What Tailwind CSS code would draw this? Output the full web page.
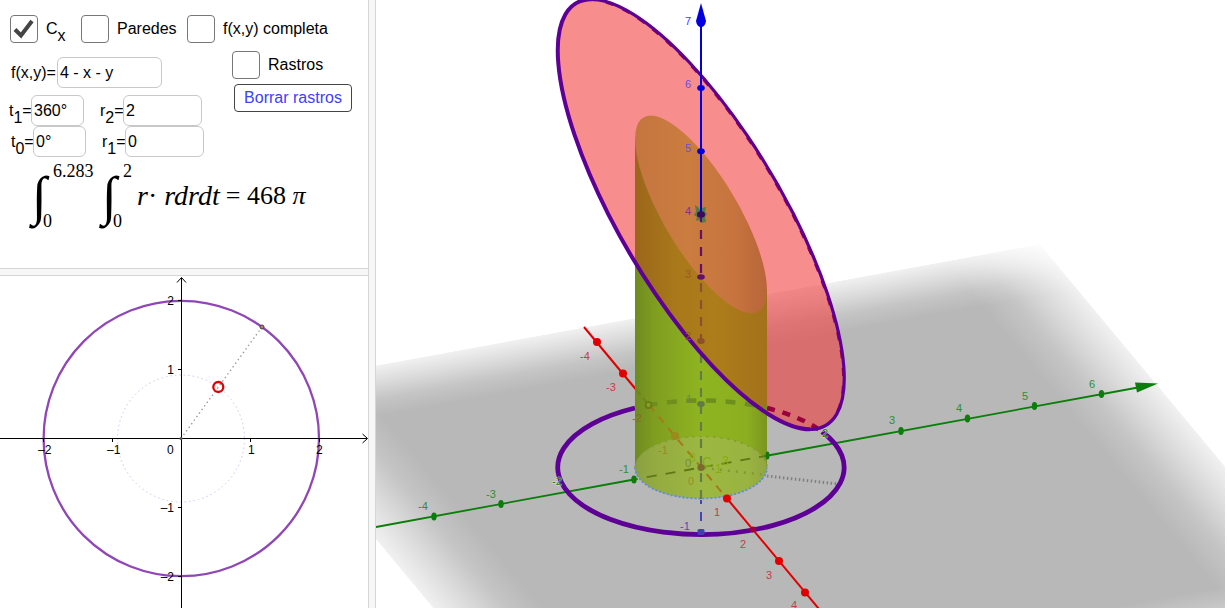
<!DOCTYPE html>
<html lang="es">

<head>
  <meta charset="UTF-8">
  <meta name="viewport" content="width=device-width, initial-scale=1.0">
  <script src="https://cdn.jsdelivr.net/npm/@tailwindcss/browser@4"></script>
  <title>Integral en coordenadas polares</title>
</head>

<body class="bg-white text-black font-['Liberation_Sans',Arial,sans-serif] text-[16px]">
  <main class="flex h-screen pr-0.5 pb-0.5">

    <div class="flex w-[369px] shrink-0 flex-col border-r border-[#d6d6d6]">

      <!-- controls -->
      <section class="h-[269px] shrink-0 overflow-hidden border-b border-[#d6d6d6] pt-[15px]">
        <div class="flex h-[27px] items-center pl-[10px]">
          <label class="flex w-[71px] items-center gap-2">
            <span class="relative size-[28px]">
              <input type="checkbox" checked class="peer block size-[28px] appearance-none rounded-[4px] border border-[#777]">
              <svg class="pointer-events-none absolute inset-0 hidden peer-checked:block" viewBox="0 0 28 28" fill="none">
                <path d="M5 14.5 L11 20.500 L22 6" stroke="#444" stroke-width="4" />
              </svg>
            </span>
            <span>C<sub class="static align-[-7px] text-[16px]">x</sub></span>
          </label>
          <label class="flex w-[106px] items-center gap-2">
            <input type="checkbox" class="size-[28px] appearance-none rounded-[4px] border border-[#777]">
            Paredes
          </label>
          <label class="flex items-center gap-2">
            <input type="checkbox" class="size-[28px] appearance-none rounded-[4px] border border-[#777]">
            f(x,y) completa
          </label>
        </div>

        <div class="flex">
          <div class="w-[232px] pt-[15px]">
            <div class="flex items-center pl-[11px]">
              <label for="fxy" class="w-[46px]">f(x,y)=</label>
              <input id="fxy" type="text" value="4 - x - y" class="h-[31px] w-[105px] rounded-md border border-[#c8c8c8] px-0.5">
            </div>
            <div class="mt-[7px] flex items-center pl-[9px]">
              <label for="t1" class="w-[22px]">t<sub class="static align-[-7px] text-[16px]">1</sub>=</label>
              <input id="t1" type="text" value="360°" class="h-[31px] w-[53px] rounded-md border border-[#c8c8c8] px-0.5">
              <label for="r2" class="ml-4 w-[23px]">r<sub class="static align-[-7px] text-[16px]">2</sub>=</label>
              <input id="r2" type="text" value="2" class="h-[31px] w-[79px] rounded-md border border-[#c8c8c8] px-0.5">
            </div>
            <div class="flex items-center pl-[11px]">
              <label for="t0" class="w-[22px]">t<sub class="static align-[-7px] text-[16px]">0</sub>=</label>
              <input id="t0" type="text" value="0°" class="h-[31px] w-[53px] rounded-md border border-[#c8c8c8] px-0.5">
              <label for="r1" class="ml-4 w-[23px]">r<sub class="static align-[-7px] text-[16px]">1</sub>=</label>
              <input id="r1" type="text" value="0" class="h-[31px] w-[79px] rounded-md border border-[#c8c8c8] px-0.5">
            </div>
          </div>
          <div class="pt-[9px]">
            <label class="flex items-center gap-2">
              <input type="checkbox" class="size-[28px] appearance-none rounded-[4px] border border-[#777]">
              Rastros
            </label>
            <button type="button" class="mt-[5px] ml-0.5 h-[28px] w-[118px] rounded-[4px] border border-[#444] leading-none text-[#4040ff]">Borrar rastros</button>
          </div>
        </div>

        <div class="flex items-center pt-1 pl-[32px] font-['Liberation_Serif',serif]">
          <span class="w-[21px] text-[54px] leading-[70px] italic">∫</span>
          <span class="flex h-[68px] w-[49px] flex-col justify-between text-[18px] leading-[18px]"><span>6.283</span><span class="-ml-2.5">0</span></span>
          <span class="w-[21px] text-[54px] leading-[70px] italic">∫</span>
          <span class="flex h-[68px] w-[14px] flex-col justify-between text-[18px] leading-[18px]"><span>2</span><span class="-ml-2.5">0</span></span>
          <span class="text-[28px] leading-[36px] whitespace-nowrap"><i>r</i>· <i>rdrdt</i></span>
          <span class="ml-1.5 text-[26px] leading-[36px] whitespace-nowrap">= 468 <i>π</i></span>
        </div>
      </section>

      <div class="h-[7px] shrink-0 border-b border-[#d6d6d6] bg-[#f7f7f7]"></div>

      <!-- 2D view -->
      <section class="min-h-0 flex-1">
        <svg class="block size-full" viewBox="0 276 368 332" preserveAspectRatio="xMinYMin slice" fill="none">
          <circle cx="181" cy="438.5" r="63.5" stroke="#c9c9f4" stroke-dasharray="1.5 3" />
          <path d="M181 438.5 L262 327" stroke="#999" stroke-width="1.4" stroke-dasharray="1.4 3" />
          <circle cx="181.3" cy="438.5" r="137.7" stroke="#9046b6" stroke-width="2.3" />
          <g stroke="#000" stroke-width="1">
            <path d="M0 438.5 H367 M362.5 434 L367.5 438.5 L362.5 443" />
            <path d="M181.5 608 V278 M177 282.5 L181.5 277.5 L186 282.5" />
            <path d="M43.5 438 v4 M112.5 438 v4 M250.5 438 v4 M319.5 438 v4" />
            <path d="M178 300.5 h4 M178 369.5 h4 M178 507.5 h4 M178 576.5 h4" />
          </g>
          <g fill="#000" font-size="12">
            <text x="38" y="454">–2</text>
            <text x="107" y="454">–1</text>
            <text x="167" y="454">0</text>
            <text x="248" y="454">1</text>
            <text x="316" y="454">2</text>
            <g text-anchor="end">
              <text x="174" y="305">2</text>
              <text x="174" y="374">1</text>
              <text x="174" y="512">–1</text>
              <text x="174" y="581">–2</text>
            </g>
          </g>
          <circle cx="181" cy="438.5" r="1.6" fill="#555" />
          <circle cx="262" cy="327" r="2" fill="#c97a5a" stroke="#444" />
          <circle cx="218.3" cy="387" r="5" stroke="#e00000" stroke-width="2.3" />
        </svg>
      </section>
    </div>

    <div class="w-[7px] shrink-0 border-r border-[#d6d6d6] bg-[#f7f7f7]"></div>

    <!-- 3D view -->
    <section class="min-w-0 flex-1">
      <svg class="block size-full" viewBox="376 0 849 608" preserveAspectRatio="xMinYMin slice" fill="none">
        <defs>
          <linearGradient id="fade">
            <stop offset="0" stop-color="#fff" stop-opacity=".2" />
            <stop offset=".04" stop-color="#fff" stop-opacity=".5" />
            <stop offset=".08" stop-color="#fff" stop-opacity=".82" />
            <stop offset=".12" stop-color="#fff" />
            <stop offset=".88" stop-color="#fff" />
            <stop offset=".92" stop-color="#fff" stop-opacity=".82" />
            <stop offset=".96" stop-color="#fff" stop-opacity=".5" />
            <stop offset="1" stop-color="#fff" stop-opacity=".2" />
          </linearGradient>
          <linearGradient id="fadeY" href="#fade" x2="0" y2="1" />
          <mask id="maskX" maskContentUnits="objectBoundingBox">
            <rect width="1" height="1" fill="url(#fade)" />
          </mask>
          <mask id="maskY" maskContentUnits="objectBoundingBox">
            <rect width="1" height="1" fill="url(#fadeY)" />
          </mask>
          <linearGradient id="green">
            <stop offset="0" stop-color="#6f8a20" />
            <stop offset=".15" stop-color="#7f9e20" />
            <stop offset=".5" stop-color="#8fb421" />
            <stop offset=".85" stop-color="#8bae20" />
            <stop offset="1" stop-color="#7b951f" />
          </linearGradient>
          <linearGradient id="brown">
            <stop offset="0" stop-color="#9c661b" />
            <stop offset=".3" stop-color="#a8781a" />
            <stop offset=".6" stop-color="#ae7d1a" />
            <stop offset="1" stop-color="#a3711b" />
          </linearGradient>
          <linearGradient id="orange" gradientUnits="userSpaceOnUse" x1="635" y1="0" x2="767" y2="0">
            <stop offset="0" stop-color="#c47640" />
            <stop offset=".4" stop-color="#cb7c3f" />
            <stop offset=".75" stop-color="#c7743f" />
            <stop offset="1" stop-color="#b86539" />
          </linearGradient>
          <clipPath id="disc">
            <circle r="1" transform="matrix(52 189 133.4 102.2 701 214.3)" />
          </clipPath>
          <clipPath id="topCut">
            <circle r="1" transform="matrix(23.9 86.9 61.4 47 701 214.3)" />
          </clipPath>
        </defs>

        <!-- ground plane -->
        <g transform="matrix(26 31.2 66.7 -12.2 701 467.5)">
          <g mask="url(#maskX)">
            <rect x="-4.49" y="-5.01" width="11.89" height="11.84" fill="#b8b8b8" mask="url(#maskY)" />
          </g>
        </g>

        <!-- x and y axes outside the cylinder -->
        <path d="M376 527 L634 479.5 M768 455.5 L1138 387.5" stroke="#0a7d0a" stroke-width="1.8" />
        <path d="M1135 382.5 L1158 383.5 L1137 392.5 Z" fill="#0a7d0a" />
        <g fill="#0a7d0a">
          <ellipse cx="434" cy="516.5" rx="2.7" ry="4" />
          <ellipse cx="501" cy="504" rx="2.7" ry="4" />
          <ellipse cx="901" cy="431" rx="2.7" ry="4" />
          <ellipse cx="967.5" cy="418.5" rx="2.7" ry="4" />
          <ellipse cx="1034.5" cy="406" rx="2.7" ry="4" />
          <ellipse cx="1101.5" cy="394" rx="2.7" ry="4" />
        </g>
        <path d="M584 327 L636 389.5" stroke="#e00000" stroke-width="2" />
        <g fill="#e00000">
          <circle cx="597" cy="342" r="4" />
          <circle cx="623" cy="373.5" r="4" />
        </g>

        <!-- domain border and radius -->
        <path d="M822 431.7 A143.2 67 0 1 1 635 408" stroke="#5e0096" stroke-width="4.8" />
        <path d="M767 476 L838 484" stroke="#808080" stroke-width="3" stroke-dasharray="1.5 2.5" />

        <!-- disc cut from the plane z = 4 - x - y -->
        <circle r="1" transform="matrix(52 189 133.4 102.2 701 214.3)" fill="#f33737" fill-opacity=".57" />
        <path d="M767 408 A143.2 67 0 0 1 822 431.7" stroke="#99003f" stroke-width="4.5" stroke-dasharray="8 8" />

        <!-- cylinder -->
        <path d="M635 139 L767 290 V467.5 A66 31 0 0 1 635 467.5 Z" fill="url(#green)" />
        <g clip-path="url(#disc)">
          <path d="M635 139 L767 290 V467.5 A66 31 0 0 1 635 467.5 Z" fill="url(#brown)" />
        </g>
        <rect x="630" y="110" width="140" height="210" fill="url(#orange)" clip-path="url(#topCut)" />
        <ellipse cx="701" cy="467.5" rx="66" ry="31" fill="#b0bd70" fill-opacity=".42" />
        <path d="M635 467.5 A66 31 0 0 1 767 467.5" stroke="#7f9a35" stroke-width="1.5" stroke-dasharray="2 5" />
        <path d="M635 467.5 A66 31 0 0 0 767 467.5" stroke="#5c8ce8" stroke-width="1.8" stroke-dasharray="2 2" />

        <!-- parts seen through the cylinder -->
        <path d="M635 408 A143.2 67 0 0 1 767 408" stroke="#6e8e1d" stroke-width="4.5" stroke-dasharray="10 9.5" stroke-dashoffset="-13" />
        <path d="M634 479.5 L768 455.5" stroke="#5f7714" stroke-width="1.8" stroke-dasharray="10 9" stroke-dashoffset="-13" />
        <path d="M636 389.5 L648 404" stroke="#708519" stroke-width="2" stroke-dasharray="7 4" />
        <path d="M649 405 L727 498.5" stroke="#a8791c" stroke-width="2" stroke-dasharray="8 7" />
        <path d="M704 468 L767 475" stroke="#7d9b34" stroke-width="2.5" stroke-dasharray="2 6" />
        <circle cx="648.5" cy="405" r="3" fill="#8ba021" stroke="#687d18" stroke-width="2" />
        <circle cx="675" cy="436" r="4" fill="#9a8b1b" />
        <g font-size="12" fill="#86ae10">
          <text x="689" y="462">8</text>
          <text x="702" y="467" font-size="14">C</text>
          <text x="715" y="473">1</text>
          <text x="722" y="465">3</text>
        </g>

        <!-- z axis -->
        <path d="M701 500 V534" stroke="#4545b8" stroke-width="2" stroke-dasharray="4 8 9 8" />
        <path d="M701 350 V500" stroke="#657b48" stroke-width="2.2" stroke-dasharray="9 8" stroke-dashoffset="-4" />
        <path d="M701 283 V348" stroke="#8c4e36" stroke-width="2.2" stroke-dasharray="9 8" />
        <path d="M701 230 V276" stroke="#64106f" stroke-width="2.2" stroke-dasharray="9 8" />
        <ellipse cx="701" cy="277" rx="3.8" ry="2.8" fill="#61106f" />
        <ellipse cx="701" cy="341" rx="3.8" ry="3" fill="#8c4e2b" />
        <ellipse cx="701" cy="404" rx="3.8" ry="3" fill="#607b45" />
        <circle cx="701" cy="467.5" r="3.6" fill="#7a6a30" />
        <rect x="697.5" y="529" width="7" height="6" rx="1.5" fill="#4040b0" />
        <path d="M695 205 l4 3 2 4 1 -4 4 -1 -1 5 2 2 -2 3 1 5 -5 1 -2 -3 -3 1 1 -4 -3 -2 2 -3 z" fill="#557a45" />

        <!-- border of the disc -->
        <g stroke="#5e0096">
          <path d="M.88 .476 A1 1 0 0 1 -.88 -.476" transform="matrix(52 189 133.4 102.2 700 214.8)" vector-effect="non-scaling-stroke" stroke="#a30035" stroke-width="2.4" stroke-dasharray="8 10" />
          <path d="M.88 .476 A1 1 0 0 1 -.88 -.476" transform="matrix(52 189 133.4 102.2 701 214.3)" vector-effect="non-scaling-stroke" stroke-width="3.2" />
          <path d="M.88 .476 A1 1 0 0 0 -.88 -.476" transform="matrix(52 189 133.4 102.2 701 214.3)" vector-effect="non-scaling-stroke" stroke-width="4" />
        </g>

        <path d="M701 22 V212" stroke="#0000e0" stroke-width="2" />
        <path d="M701 212 V222" stroke="#50107c" stroke-width="2" />
        <ellipse cx="701" cy="214.5" rx="4" ry="3.2" fill="#3b0a60" />
        <path d="M701 3 L706 21 Q705 27 701 27 Q697 27 696 21 Z" fill="#0000e0" />
        <g fill="#0000e0">
          <ellipse cx="701" cy="88" rx="3.8" ry="3" />
          <ellipse cx="701" cy="151.3" rx="3.8" ry="3" />
        </g>

        <!-- x axis in front -->
        <path d="M727 498.5 L819 609" stroke="#e00000" stroke-width="2" />
        <g fill="#e00000">
          <circle cx="727" cy="498.5" r="4" />
          <circle cx="753" cy="529.5" r="3" fill="#a0003c" />
          <circle cx="779" cy="561" r="4" />
          <circle cx="805" cy="592.5" r="4" />
        </g>
        <g fill="#0a7d0a">
          <ellipse cx="634" cy="479.5" rx="2.7" ry="4" />
          <ellipse cx="767.5" cy="455.5" rx="2" ry="4" />
        </g>

        <g font-size="11">
          <g fill="#2f8f30">
            <text x="418" y="510">-4</text>
            <text x="486" y="498">-3</text>
            <text x="552" y="485" fill="#0a7d0a" stroke="#fff" stroke-opacity=".6" paint-order="stroke">-2</text>
            <text x="619" y="473">-1</text>
            <text x="757" y="448" fill="#80a020">1</text>
            <text x="822" y="437" fill="#0a7d0a" stroke="#fff" stroke-opacity=".6" paint-order="stroke">2</text>
            <text x="889" y="424">3</text>
            <text x="956" y="412">4</text>
            <text x="1022" y="400">5</text>
            <text x="1089" y="388">6</text>
          </g>
          <g fill="#c0404c">
            <text x="580" y="360">-4</text>
            <text x="606" y="391">-3</text>
            <text x="632" y="422" fill="#8c6a28">-2</text>
            <text x="658" y="454" fill="#a08526">-1</text>
            <text x="688" y="485" fill="#a28a26">0</text>
            <text x="714" y="516">1</text>
            <text x="740" y="548">2</text>
            <text x="766" y="579">3</text>
            <text x="791" y="609">4</text>
          </g>
          <g>
            <text x="685" y="25" fill="#4040ff">7</text>
            <text x="685" y="88" fill="#6a4af0">6</text>
            <text x="685" y="152" fill="#6a4af0">5</text>
            <text x="685" y="215" fill="#84308c">4</text>
            <text x="685" y="278" fill="#a4552a">3</text>
            <text x="685" y="340" fill="#8c5a20">2</text>
            <text x="686" y="403" fill="#70884a">1</text>
            <text x="685" y="467" fill="#758a45">0</text>
            <text x="680" y="530" fill="#5a48b0">-1</text>
          </g>
        </g>
      </svg>
    </section>
  </main>
</body>

</html>
